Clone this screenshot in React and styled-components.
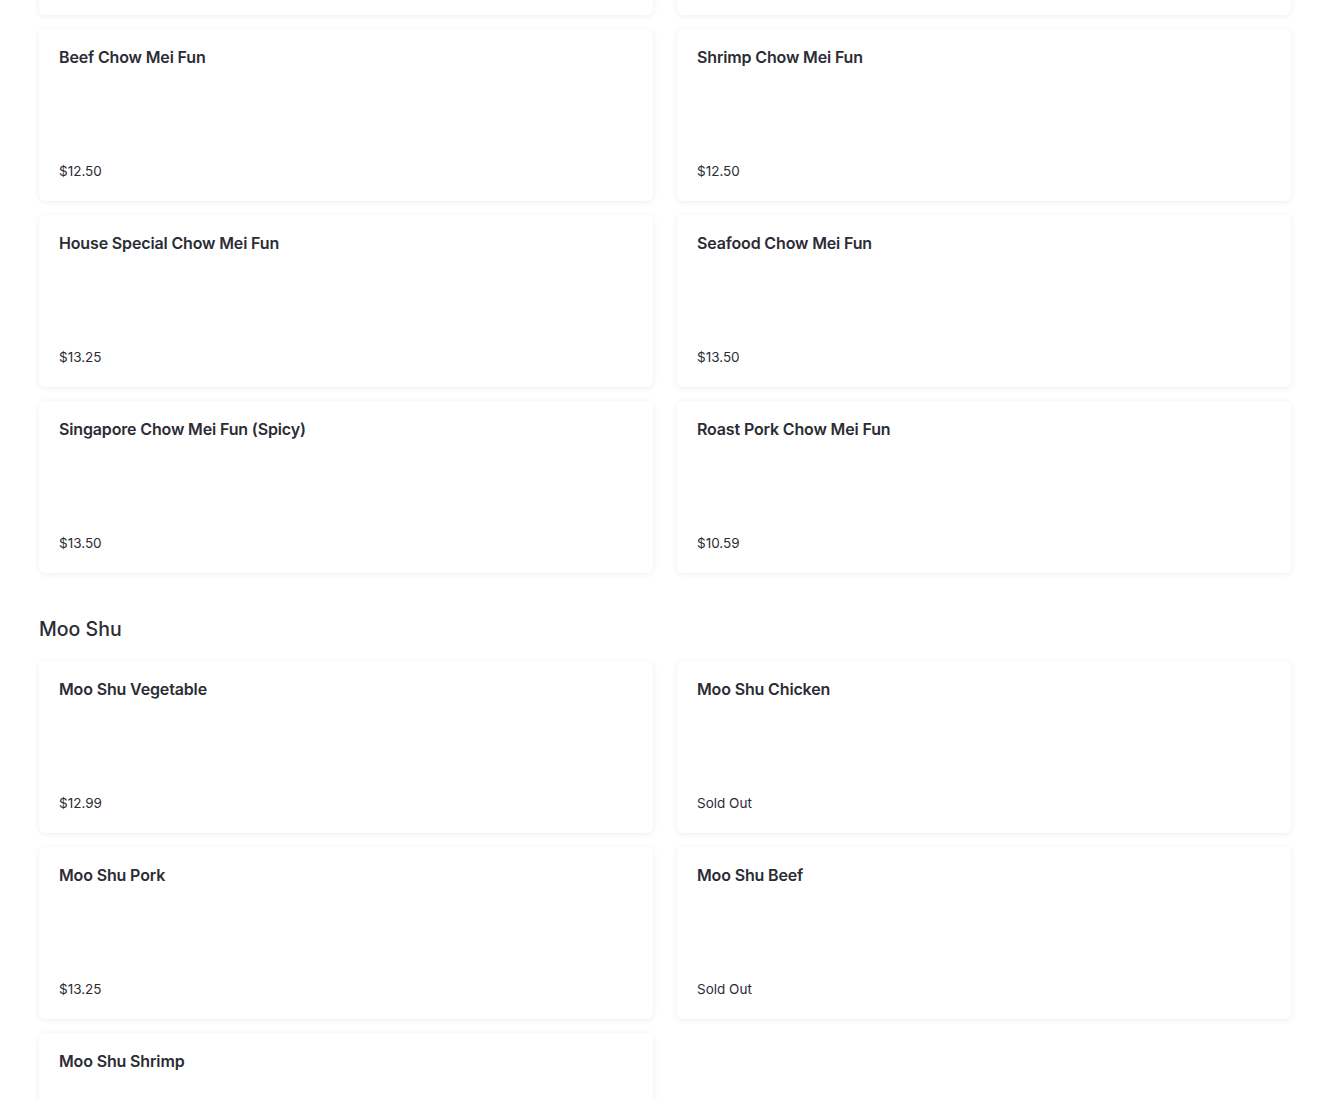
import React from 'react';
import styled, { createGlobalStyle } from 'styled-components';

const GlobalStyle = createGlobalStyle`
    html, body {
        margin: 0;
        padding: 0;
        background: #ffffff;
        font-family: Inter, "Noto Sans", sans-serif;
        color: #2c2c35;
        overflow: hidden;
    }
`

const sections = [
    {
        name: null,
        items: [
            { name: 'Chicken Chow Mei Fun', price: '$12.25' },
            { name: 'Pork Chow Mei Fun', price: '$12.25' },
            { name: 'Beef Chow Mei Fun', price: '$12.50' },
            { name: 'Shrimp Chow Mei Fun', price: '$12.50' },
            { name: 'House Special Chow Mei Fun', price: '$13.25' },
            { name: 'Seafood Chow Mei Fun', price: '$13.50' },
            { name: 'Singapore Chow Mei Fun (Spicy)', price: '$13.50' },
            { name: 'Roast Pork Chow Mei Fun', price: '$10.59' },
        ]
    },
    {
        name: 'Moo Shu',
        items: [
            { name: 'Moo Shu Vegetable', price: '$12.99' },
            { name: 'Moo Shu Chicken', price: 'Sold Out' },
            { name: 'Moo Shu Pork', price: '$13.25' },
            { name: 'Moo Shu Beef', price: 'Sold Out' },
            { name: 'Moo Shu Shrimp', price: '$13.99' },
        ]
    }
]

const App = () => {
    return (
        <>
            <GlobalStyle />
            <Menu>
                {sections.map((section, i) => (
                    <Section key={i} $first={i === 0}>
                        {section.name && <Heading>{section.name}</Heading>}
                        <Grid>
                            {section.items.map(item => (
                                <Card key={item.name}>
                                    <Title>{item.name}</Title>
                                    <Price>{item.price}</Price>
                                </Card>
                            ))}
                        </Grid>
                    </Section>
                ))}
            </Menu>
        </>
    );
};

export default App;

const Menu = styled.div`
    padding: 0 39px;
    margin-top: -157px;
`

const Section = styled.section`
    margin-top: ${p => p.$first ? '0' : '40px'};
`

const Heading = styled.h2`
    margin: 0 0 16px;
    font-size: 19.5px;
    line-height: 32px;
    font-weight: 500;
    color: #2c2c35;
`

const Grid = styled.div`
    display: grid;
    grid-template-columns: 1fr 1fr;
    column-gap: 24px;
    row-gap: 14px;
`

const Card = styled.div`
    height: 172px;
    box-sizing: border-box;
    padding: 18px 20px 20px;
    display: flex;
    flex-direction: column;
    justify-content: space-between;
    background: #fff;
    border-radius: 6px;
    box-shadow: 0 1px 6px rgba(0, 0, 0, 0.07);
`

const Title = styled.div`
    font-size: 16px;
    line-height: 20px;
    font-weight: 600;
    letter-spacing: -0.15px;
    color: #2c2c35;
`

const Price = styled.div`
    font-size: 13.5px;
    line-height: 20px;
    color: #2c2c35;
`
